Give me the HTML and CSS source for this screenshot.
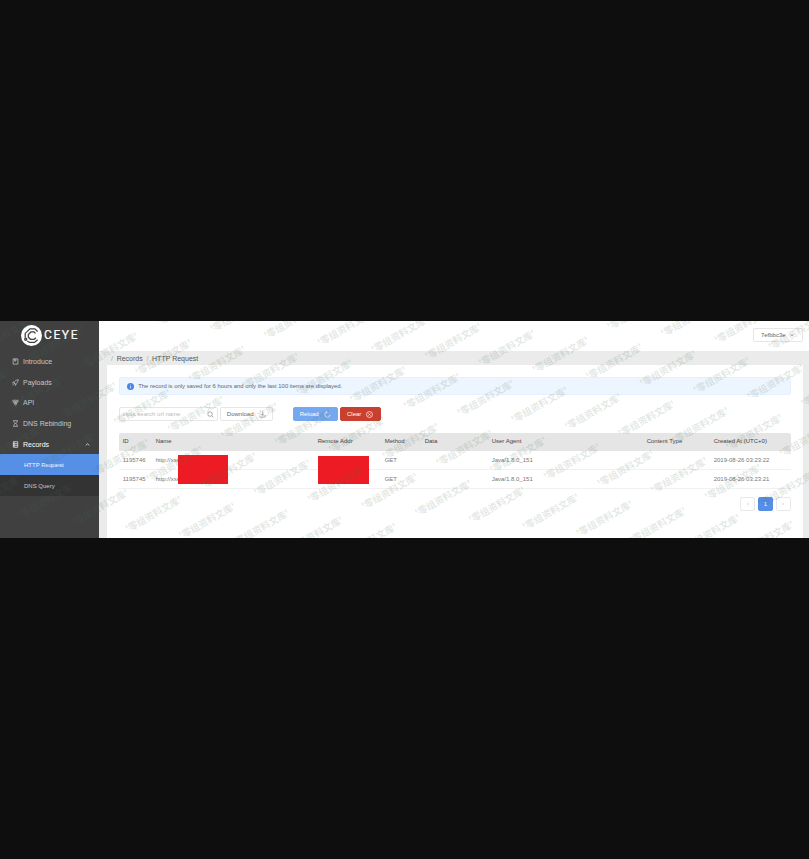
FILE: index.html
```html
<!DOCTYPE html>
<html lang="en">
<head>
<meta charset="utf-8">
<title>CEYE - HTTP Request</title>
<link rel="stylesheet" href="styles.css">
</head>
<body>
<div class="app">
  <aside class="sidebar">
    <div class="logo">
      <svg class="logo-mark" viewBox="0 0 20 20">
        <circle cx="10" cy="10" r="10" fill="#fff" stroke="none"/>
        <path d="M15.800 6.200 13.200 3.600H8.600L4 8v4.200M6 15.200 8.200 16.600h4.600l3-2.600"/>
        <path d="M13.800 8 12.400 6.600H9.400L7 9v2.600l2 2h3.600l1.600-1.400"/>
        <circle cx="4.500" cy="13.600" r="1"/>
      </svg>
      <svg class="logo-word" viewBox="0 0 34 10"><text x="0" y="9.400" textLength="33.500">CEYE</text></svg>
    </div>
    <nav class="menu">
      <a class="item"><svg viewBox="0 0 8 8"><path d="M1.300 1h5.400v6H1.300zM3 1v2.600h1.400V1"/></svg>Introduce</a>
      <a class="item"><svg viewBox="0 0 8 8"><path d="M2 4.500C3 2.300 5 1 7.200.8 7 3 5.700 5 3.500 6zM2 4.500 3.500 6M2.500 3.300 1 3.700.7 5M4.700 5.500 4.300 7 3 7.300M1.800 5.800.7 7.200"/></svg>Payloads</a>
      <a class="item"><svg viewBox="0 0 8 8"><circle cx="1.700" cy="2.200" r="1"/><circle cx="4" cy="2.200" r="1"/><circle cx="6.300" cy="2.200" r="1"/><circle cx="4" cy="6" r="1"/><path d="M1.700 3.100 3.200 5.600M6.300 3.100 4.800 5.600M4 3v2M2 4.200h4"/></svg>API</a>
      <a class="item"><svg viewBox="0 0 8 8"><path d="M1.300.8h5.400M1.300 7.200h5.400M2 .8c0 2 .7 2.600 2 3.200 1.300-.6 2-1.200 2-3.200M2 7.200C2 5.200 2.700 4.600 4 4c1.300.6 2 1.200 2 3.200"/></svg>DNS Rebinding</a>
      <a class="item open"><svg viewBox="0 0 8 8"><path d="M1.500.8h5v6.400h-5zM1.500 3h5M1.500 5h5M2.500 2h1M2.500 4h1M2.500 6.100h1"/></svg>Records<svg class="caret" viewBox="0 0 8 8"><path d="M2 5 4 3.200 6 5"/></svg></a>
      <a class="sub active">HTTP Request</a>
      <a class="sub">DNS Query</a>
    </nav>
  </aside>
  <div class="main">
    <header class="topbar">
      <button class="user">7efbbc3e<svg viewBox="0 0 8 8"><path d="M2 3.200 4 5l2-1.800"/></svg></button>
    </header>
    <div class="crumbs"><i>/</i><span>Records</span><i>/</i><span>HTTP Request</span></div>
    <section class="card">
      <div class="alert"><svg viewBox="0 0 8 8"><circle cx="4" cy="4" r="4" fill="#4a86e8"/><path d="M4 3.400v2.800M4 1.800v.8" stroke="#fff" stroke-width=".8"/></svg>The record is only saved for 6 hours and only the last 100 items are displayed.</div>
      <div class="tools">
        <div class="search"><span>input search url name</span><svg viewBox="0 0 8 8"><circle cx="3.500" cy="3.500" r="2.600"/><path d="m5.400 5.400 2 2"/></svg></div>
        <button class="btn download">Download<svg viewBox="0 0 8 8"><path d="M4 .8v4M2.700 3.600 4 4.900l1.300-1.300M1 5v2h6V5"/></svg></button>
        <button class="btn reload">Reload<svg viewBox="0 0 8 8"><path d="M3.300 1.200a3 3 0 1 0 3.600 3.300M3.300 1.200l-1.200-.5M3.300 1.200l-.5 1.200"/></svg></button>
        <button class="btn clear">Clear<svg viewBox="0 0 8 8"><circle cx="4" cy="4" r="3.400"/><path d="m2.700 2.700 2.600 2.600M5.300 2.700 2.700 5.300"/></svg></button>
      </div>
      <div class="table">
        <div class="row head"><span>ID</span><span>Name</span><span>Remote Addr</span><span>Method</span><span>Data</span><span>User Agent</span><span>Content Type</span><span>Created At (UTC+0)</span></div>
        <div class="row"><span>1195746</span><span>http://xxe</span><span></span><span>GET</span><span></span><span>Java/1.8.0_151</span><span></span><span>2019-08-26 03:23:22</span></div>
        <div class="row"><span>1195745</span><span>http://xxe</span><span></span><span>GET</span><span></span><span>Java/1.8.0_151</span><span></span><span>2019-08-26 03:23:21</span></div>
        <div class="mask mask-name"></div>
        <div class="mask mask-addr"></div>
      </div>
      <div class="pager">
        <span><svg viewBox="0 0 8 8"><path d="M4.800 2.500 3.300 4l1.500 1.500"/></svg></span><span class="current">1</span><span><svg viewBox="0 0 8 8"><path d="M3.300 2.500 4.800 4 3.300 5.500"/></svg></span>
      </div>
    </section>
  </div>
  <svg class="watermark" id="watermark" viewBox="0 0 809 217" aria-hidden="true"></svg>
</div>
<script src="watermark.js"></script>
</body>
</html>
```
FILE: styles.css
```css
* { box-sizing: border-box; }
body {
  margin: 0;
  height: 859px;
  padding-top: 321px;
  overflow: hidden;
  background: #0e0e0e;
  font-family: "Liberation Sans", Arial, sans-serif;
  font-size: 6px;
  color: #666;
}
svg { fill: none; stroke: currentColor; stroke-width: .8; flex: none; }
button { font: inherit; margin: 0; padding: 0; }
.app { position: relative; display: flex; width: 809px; height: 217px; overflow: hidden; background: #fff; }

.sidebar { width: 99px; background: #404040; flex: none; }
.logo { height: 30px; padding: 4px 0 0 21px; display: flex; align-items: flex-start; gap: 2px; }
.logo-mark { width: 21px; height: 21px; stroke: #404040; stroke-width: 1.2; }
.logo-word { width: 34px; height: 10px; margin-top: 5px; overflow: visible; }
.logo-word text { font-family: Roboto, sans-serif; font-size: 12px; font-weight: 400; fill: #fff; stroke: #fff; stroke-width: .2; }
.item { display: flex; align-items: center; height: 20.7px; padding-left: 12px; font-size: 7px; color: #c8c8c8; }
.item svg { width: 7px; height: 7px; margin-right: 4px; }
.item.open { color: #fff; }
.item .caret { margin: 0 8px 0 auto; }
.sub { display: flex; align-items: center; height: 20.8px; padding-left: 24px; font-size: 6px; color: #c8c8c8; background: #333; }
.sub.active { background: #568fe6; color: #f4f8ff; }

.main { flex: 1; display: flex; flex-direction: column; background: #ebebeb; }
.topbar { height: 30px; background: #fff; display: flex; justify-content: flex-end; padding: 7px 6.500px 0 0; }
.user { width: 49.500px; height: 14px; border: 1px solid #e6e6e6; border-radius: 2px; background: #fff; color: #666; display: flex; align-items: center; justify-content: center; gap: 3px; }
.user svg { width: 6px; height: 6px; }
.crumbs { height: 14px; display: flex; align-items: center; padding-left: 12px; font-size: 7px; color: #555; }
.crumbs i { font-style: normal; color: #aaa; margin-right: 3.700px; }
.crumbs span { margin-right: 3.700px; }
.card { flex: 1; margin: 0 6.500px 0 8px; padding: 12px 12px 0 11.700px; background: #fff; }

.alert { height: 18px; display: flex; align-items: center; padding-left: 7.500px; background: #edf5fe; border: 1px solid #e4f0fd; border-radius: 2px; color: #666; font-size: 5.900px; white-space: nowrap; }
.alert svg { width: 7px; height: 7px; margin-right: 4px; stroke: none; }
.tools { display: flex; height: 14px; margin-top: 12px; }
.search { width: 99px; border: 1px solid #e6e6e6; border-radius: 2px; display: flex; align-items: center; justify-content: space-between; padding: 0 3px; color: #bbb; }
.search svg { width: 7px; height: 7px; color: #888; }
.btn { display: flex; align-items: center; justify-content: center; gap: 5px; border: 1px solid #e6e6e6; border-radius: 2px; background: #fff; color: #666; }
.btn svg { width: 7px; height: 7px; }
.download { width: 53px; margin-left: 2px; }
.download svg { color: #999; }
.reload { width: 45px; margin-left: 20px; border-color: #75a8ee; background: #75a8ee; color: #fff; }
.clear { width: 41px; margin-left: 2px; border-color: #c94031; background: #c94031; color: #fff; }

.table { position: relative; margin-top: 11.500px; }
.row { display: grid; grid-template-columns: 33px 162px 67px 40px 67px 155px 67px 80px; align-items: center; height: 18.800px; border-bottom: 1px solid #f1f1f1; color: #777; white-space: nowrap; }
.row span { padding-left: 4px; }
.row.head { background: #e5e5e5; color: #444; border-radius: 2px 2px 0 0; border-bottom-color: #e5e5e5; }
.mask { position: absolute; background: #ed1c24; }
.mask-name { left: 59.500px; top: 22.500px; width: 49.700px; height: 29px; }
.mask-addr { left: 199.500px; top: 23.500px; width: 51.300px; height: 28px; }

.pager { display: flex; justify-content: flex-end; gap: 3.500px; margin-top: 8px; }
.pager span { width: 14.400px; height: 14px; display: flex; align-items: center; justify-content: center; border: 1px solid #e8e8e8; border-radius: 2px; color: #bbb; }
.pager .current { background: #568fe6; border-color: #568fe6; color: #fff; }
.pager svg { width: 6px; height: 6px; }

.watermark { position: absolute; inset: 0; width: 809px; height: 217px; pointer-events: none; }
.watermark text { font-family: "Noto Sans CJK SC", sans-serif; font-size: 9.600px; letter-spacing: -.1px; font-weight: 700; fill: #4a6e52; fill-opacity: .17; stroke: none; }
```
FILE: watermark.js
```js
// Repeats the slanted library name over the page on a skewed lattice.
const layer = document.getElementById("watermark");
const origin = { x: 427.5, y: 39 };
const across = { x: 53.7, y: 6.8 };
const down = { x: -21.2, y: 50 };
for (let j = -4; j <= 6; j++) {
  for (let i = -16; i <= 16; i++) {
    const x = origin.x + i * across.x + j * down.x;
    const y = origin.y + i * across.y + j * down.y;
    if (x < -50 || x > 806 || y < 2 || y > 245) continue;
    const t = document.createElementNS("http://www.w3.org/2000/svg", "text");
    t.setAttribute("transform", `translate(${x} ${y}) rotate(-29.5)`);
    t.textContent = "'零组资料文库'";
    layer.appendChild(t);
  }
}
```
